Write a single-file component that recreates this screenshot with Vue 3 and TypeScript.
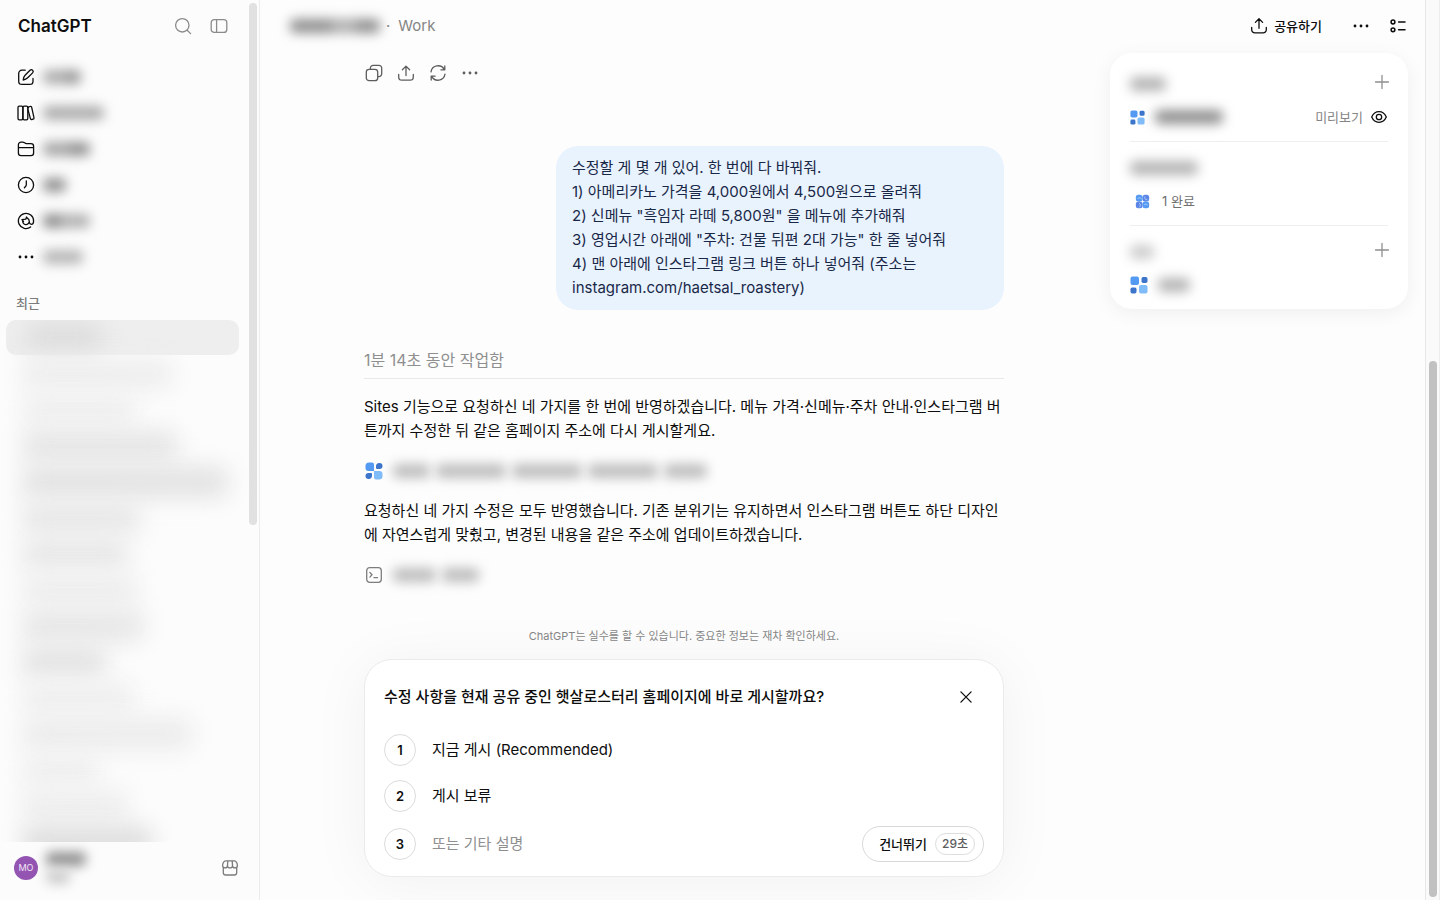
<script setup lang="ts">
import { ref } from 'vue'

interface Segment {
  width: number
  tone: string
}

interface NavItem {
  icon: 'edit' | 'library' | 'folder' | 'clock' | 'at' | 'more'
  label: Segment[]
}

const navItems: NavItem[] = [
  { icon: 'edit', label: [{ width: 22, tone: '#acacac' }, { width: 16, tone: '#999999' }] },
  { icon: 'library', label: [{ width: 61, tone: '#acacac' }] },
  { icon: 'folder', label: [{ width: 26, tone: '#a6a6a6' }, { width: 21, tone: '#929292' }] },
  { icon: 'clock', label: [{ width: 23, tone: '#929292' }] },
  { icon: 'at', label: [{ width: 17, tone: '#8c8c8c' }, { width: 30, tone: '#b0b0b0' }] },
  { icon: 'more', label: [{ width: 40, tone: '#b6b6b6' }] },
]

const history: Segment[] = [
  { width: 76, tone: '#dedede' },
  { width: 150, tone: '#eeeeee' },
  { width: 112, tone: '#efefef' },
  { width: 156, tone: '#e6e6e6' },
  { width: 206, tone: '#e3e3e3' },
  { width: 118, tone: '#e8e8e8' },
  { width: 106, tone: '#e8e8e8' },
  { width: 116, tone: '#eeeeee' },
  { width: 122, tone: '#e7e7e7' },
  { width: 84, tone: '#e4e4e4' },
  { width: 112, tone: '#efefef' },
  { width: 170, tone: '#ececec' },
  { width: 76, tone: '#efefef' },
  { width: 106, tone: '#eeeeee' },
  { width: 130, tone: '#dedede' },
]

const requestLines: string[] = [
  '수정할 게 몇 개 있어. 한 번에 다 바꿔줘.',
  '1) 아메리카노 가격을 4,000원에서 4,500원으로 올려줘',
  '2) 신메뉴 "흑임자 라떼 5,800원" 을 메뉴에 추가해줘',
  '3) 영업시간 아래에 "주차: 건물 뒤편 2대 가능" 한 줄 넣어줘',
  '4) 맨 아래에 인스타그램 링크 버튼 하나 넣어줘 (주소는 instagram.com/haetsal_roastery)',
]

const choices: string[] = ['지금 게시 (Recommended)', '게시 보류']
const customAnswer = ref('')
</script>

<template>
  <div class="app">
    <aside class="sidebar">
      <div class="side-head">
        <span class="brand">ChatGPT</span>
        <div class="side-tools">
          <button type="button" aria-label="검색">
            <svg class="ic" viewBox="0 0 18 18"><circle cx="8.3" cy="8.3" r="6.7" /><path d="M13.2 13.2 16.6 16.6" /></svg>
          </button>
          <button type="button" aria-label="사이드바">
            <svg class="ic" viewBox="0 0 18 18"><rect x="1.2" y="2.6" width="15.6" height="12.8" rx="3" /><path d="M6.600 2.600v12.800" /></svg>
          </button>
        </div>
      </div>

      <nav class="nav">
        <button v-for="item in navItems" :key="item.icon" type="button" class="nav-item" :aria-label="item.icon">
          <svg class="ic" viewBox="0 0 18 18">
            <template v-if="item.icon === 'edit'">
              <path d="M8.200 2.200H4.900a3.200 3.200 0 0 0-3.200 3.200v7.800a3.200 3.200 0 0 0 3.200 3.200h7.900a3.200 3.200 0 0 0 3.200-3.200V10.400" />
              <path d="M6.200 12c.2-2.500.7-3.600 1.900-4.800l4.900-4.900a1.800 1.800 0 0 1 2.600 2.600l-4.900 4.900c-1.200 1.200-2.200 1.900-4.500 2.200z" />
            </template>
            <template v-else-if="item.icon === 'library'">
              <rect x="1" y="2.200" width="4.900" height="13.600" rx="1.300" />
              <rect x="5.900" y="2.200" width="4.900" height="13.600" rx="1.300" />
              <path d="m11.200 4 .1-.3c0-.6.4-1 1-1.100l.9-.2a1.200 1.200 0 0 1 1.500.9l2.300 10.500a1.200 1.200 0 0 1-.9 1.400l-1.300.3a1.200 1.200 0 0 1-1.400-.9L10.900 5.500" />
            </template>
            <template v-else-if="item.icon === 'folder'">
              <path d="M1.400 13V4.700A2.600 2.600 0 0 1 4 2.100h1.700c1.800 0 2 1.500 3.800 1.500H14a2.600 2.600 0 0 1 2.600 2.600V13a2.600 2.600 0 0 1-2.600 2.600H4A2.600 2.600 0 0 1 1.400 13zM1.400 7.700h15.200" />
            </template>
            <template v-else-if="item.icon === 'clock'">
              <circle cx="9" cy="9" r="7.600" /><path d="M9.300 5v3.800c0 .6-.2 1-.6 1.400l-1.300 1.500" />
            </template>
            <template v-else-if="item.icon === 'at'">
              <path d="M13.600 15A7.600 7.600 0 1 1 16.600 9c0 2.200-.9 3.300-2.200 3.300-1.200 0-1.900-.8-2.100-1.900" />
              <path d="M5.700 8.900a3.300 3.300 0 1 0 6.600.7c0-1.600-.8-2.800-2-3.400L9.500 5l-.7 2.200M5 7.600l3.800-.4M5 7.600l1.500 1.900" />
            </template>
            <g v-else class="dots"><circle cx="3" cy="9" r="1.400" /><circle cx="9" cy="9" r="1.400" /><circle cx="15" cy="9" r="1.400" /></g>
          </svg>
          <span class="veil">
            <i v-for="(s, i) in item.label" :key="i" :style="{ width: s.width + 'px', background: s.tone }" />
          </span>
        </button>
      </nav>

      <h2 class="recent">최근</h2>
      <ul class="history">
        <li v-for="(row, i) in history" :key="i" :class="{ current: i === 0 }">
          <i :style="{ width: row.width + 'px', background: row.tone }" />
        </li>
      </ul>

      <div class="account">
        <span class="avatar">MO</span>
        <span class="account-name">
          <span class="veil"><i class="w40" /></span>
          <span class="veil haze"><i class="w24" /></span>
        </span>
        <button type="button" aria-label="스토어">
          <svg class="ic" viewBox="0 0 18 18">
            <path d="M2.300 8.700v5A2.400 2.400 0 0 0 4.700 16h8.600a2.400 2.400 0 0 0 2.400-2.300v-5" />
            <path d="M4.500 1.900h9c1.500 0 2.900 2.600 2.900 4.500a2.400 2.400 0 0 1-4.900 0 2.500 2.500 0 0 1-5 0 2.400 2.400 0 0 1-4.900 0c0-1.900 1.400-4.500 2.900-4.500zM6.800 2l-.3 4.400M11.200 2l.3 4.400" />
          </svg>
        </button>
      </div>
      <span class="side-scroll" />
    </aside>

    <main class="main">
      <header class="topbar">
        <span class="veil title"><i class="w42" /><i class="w24 light" /><i class="w24" /></span>
        <span class="mode"><span>·</span><span>Work</span></span>
        <div class="top-actions">
          <button type="button" class="share">
            <svg class="ic" viewBox="0 0 18 18"><path d="M1.700 10.500v2.200A3.200 3.200 0 0 0 4.900 15.900h8.200a3.200 3.200 0 0 0 3.200-3.200v-2.200M9 11.300V2M5.400 5.400 9 1.800l3.600 3.600" /></svg>
            공유하기
          </button>
          <button type="button" class="top-more" aria-label="더 보기">
            <svg class="ic" viewBox="0 0 18 18"><g class="dots"><circle cx="3" cy="9" r="1.400" /><circle cx="9" cy="9" r="1.400" /><circle cx="15" cy="9" r="1.400" /></g></svg>
          </button>
          <button type="button" aria-label="요약">
            <svg class="ic bold" viewBox="0 0 18 18"><circle cx="4" cy="5" r="1.900" /><circle cx="4" cy="12.800" r="1.900" /><path d="M9.600 5h6.400M9.600 12.800h6.400" /></svg>
          </button>
        </div>
      </header>

      <div class="body">
        <section class="chat">
          <div class="thread">
            <div class="actions">
              <button type="button" aria-label="복사">
                <svg class="ic" viewBox="0 0 18 18"><rect x="1.300" y="5.300" width="11.400" height="11.400" rx="2.800" /><path d="M5.400 5.200V4.100a2.800 2.800 0 0 1 2.800-2.800h5.700a2.800 2.800 0 0 1 2.800 2.800v5.700a2.800 2.800 0 0 1-2.800 2.800h-1.100" /></svg>
              </button>
              <button type="button" aria-label="공유">
                <svg class="ic" viewBox="0 0 18 18"><path d="M1.700 10.500v2.500A3.200 3.200 0 0 0 4.900 16.200h8.200a3.200 3.200 0 0 0 3.200-3.200v-2.500M9 11.500V2.200M5.400 5.700 9 2.100l3.600 3.600" /></svg>
              </button>
              <button type="button" aria-label="다시 생성">
                <svg class="ic" viewBox="0 0 18 18"><path d="M2 7.800A7.100 7.100 0 0 1 15.300 5.600M16 10.200A7.100 7.100 0 0 1 2.700 12.400M15.800 1.900v3.900h-3.900M2.200 16.100v-3.900h3.900" /></svg>
              </button>
              <button type="button" aria-label="더 보기">
                <svg class="ic" viewBox="0 0 18 18"><g class="dots"><circle cx="3" cy="9" r="1.400" /><circle cx="9" cy="9" r="1.400" /><circle cx="15" cy="9" r="1.400" /></g></svg>
              </button>
            </div>

            <div class="bubble"><p v-for="line in requestLines" :key="line">{{ line }}</p></div>

            <div class="worked">1분 14초 동안 작업함</div>
            <p class="answer">Sites 기능으로 요청하신 네 가지를 한 번에 반영하겠습니다. 메뉴 가격·신메뉴·주차 안내·인스타그램 버튼까지 수정한 뒤 같은 홈페이지 주소에 다시 게시할게요.</p>
            <div class="step">
              <svg class="tile" viewBox="0 0 18 18">
                <path class="b1" d="M4 .5h3A2 2 0 0 1 9 2.500V9H3.500A3 3 0 0 1 .5 6V4A3.500 3.500 0 0 1 4 .5z" />
                <path class="b2" d="M14.500 1a3 3 0 0 1 0 6h-2.500a1 1 0 0 1-1-1V4a3 3 0 0 1 3.500-3zM3.500 11H6a1 1 0 0 1 1 1v2a3 3 0 0 1-3.500 3 3 3 0 0 1 0-6z" />
                <path class="b3" d="M9 9h5.500a3 3 0 0 1 3 3v2a3.500 3.500 0 0 1-3.500 3.500h-3a2 2 0 0 1-2-2z" />
              </svg>
              <span class="veil pale"><i class="w36" /><i class="w68" /><i class="w68" /><i class="w68" /><i class="w42" /></span>
            </div>
            <p class="answer">요청하신 네 가지 수정은 모두 반영했습니다. 기존 분위기는 유지하면서 인스타그램 버튼도 하단 디자인에 자연스럽게 맞췄고, 변경된 내용을 같은 주소에 업데이트하겠습니다.</p>
            <div class="step">
              <svg class="ic" viewBox="0 0 18 18"><rect x="1.700" y="1.700" width="14.600" height="14.600" rx="3" /><path d="m4.900 6.500 2.100 2.300-2.100 2.300M9 11.700h3.500" /></svg>
              <span class="veil pale"><i class="w42" /><i class="w36" /></span>
            </div>
          </div>

          <div class="dock">
            <p class="notice">ChatGPT는 실수를 할 수 있습니다. 중요한 정보는 재차 확인하세요.</p>
            <form class="ask" @submit.prevent>
              <div class="ask-head">
                <h1>수정 사항을 현재 공유 중인 햇살로스터리 홈페이지에 바로 게시할까요?</h1>
                <button type="button" aria-label="닫기">
                  <svg class="ic" viewBox="0 0 18 18"><path d="m3.900 3.900 10.200 10.200M14.100 3.900 3.900 14.100" /></svg>
                </button>
              </div>
              <button v-for="(choice, i) in choices" :key="choice" type="button" class="choice">
                <span class="num">{{ i + 1 }}</span>{{ choice }}
              </button>
              <div class="choice other">
                <label for="custom-answer" class="num">3</label>
                <input id="custom-answer" v-model="customAnswer" type="text" placeholder="또는 기타 설명" />
                <button type="button" class="skip">건너뛰기 <span class="timer">29초</span></button>
              </div>
            </form>
          </div>
        </section>

        <aside class="side-panel">
          <section>
            <div class="panel-head">
              <span class="veil faint"><i class="w36" /></span>
              <button type="button" aria-label="추가"><svg class="ic" viewBox="0 0 18 18"><path d="M9 2.500v13M2.500 9h13" /></svg></button>
            </div>
            <div class="panel-row">
              <svg class="tile small" viewBox="0 0 18 18"><rect class="b1" x=".5" y=".5" width="8.500" height="8.500" rx="2" /><rect class="b2" x="11.500" y="1" width="6" height="6" rx="1.700" /><rect class="b2" x=".5" y="11.500" width="6" height="6" rx="1.700" /><rect class="b3" x="9" y="9" width="8.500" height="8.500" rx="2" /></svg>
              <span class="veil"><i class="w68" /></span>
              <a href="#" class="preview">미리보기
                <svg class="ic" viewBox="0 0 18 18"><path d="M1.700 9C3.200 5.600 5.900 3.700 9 3.700S14.800 5.600 16.300 9C14.800 12.400 12.100 14.300 9 14.300S3.200 12.400 1.700 9z" /><circle cx="9" cy="9" r="2.700" /></svg>
              </a>
            </div>
          </section>
          <section>
            <div class="panel-head"><span class="veil faint"><i class="w68" /></span></div>
            <div class="panel-row done">
              <svg class="tile small" viewBox="0 0 18 18"><rect class="b1" x="1" y="1" width="8" height="8" rx="3" /><rect class="b4" x="9" y="1" width="8" height="8" rx="3" /><rect class="b4" x="1" y="9" width="8" height="8" rx="3" /><rect class="b1" x="9" y="9" width="8" height="8" rx="3" /><path class="mark" d="M3 6c1-2 3-2 5 0M12 3c-1 2 0 4 3 4M5 11c2 1 2 3 0 5M11 13c1-1 3-1 4 0" /></svg>
              <span>1 완료</span>
            </div>
          </section>
          <section>
            <div class="panel-head">
              <span class="veil haze"><i class="w24" /></span>
              <button type="button" aria-label="추가"><svg class="ic" viewBox="0 0 18 18"><path d="M9 2.500v13M2.500 9h13" /></svg></button>
            </div>
            <div class="panel-row">
              <svg class="tile" viewBox="0 0 18 18"><rect class="b1" x=".5" y=".5" width="8.500" height="8.500" rx="2" /><rect class="b2" x="11.500" y="1" width="6" height="6" rx="1.700" /><rect class="b2" x=".5" y="11.500" width="6" height="6" rx="1.700" /><rect class="b3" x="9" y="9" width="8.500" height="8.500" rx="2" /></svg>
              <span class="veil faint"><i class="w32" /></span>
            </div>
          </section>
        </aside>
      </div>
    </main>

    <div class="gutter"><span /></div>
  </div>
</template>

<style>
body {
  margin: 0;
  background: #fcfcfc;
}
</style>

<style scoped>
* {
  box-sizing: border-box;
}
.app {
  display: grid;
  grid-template-columns: 260px minmax(0, 1fr) 15px;
  height: 100vh;
  overflow: hidden;
  background: #fdfdfd;
  color: #0d0d0d;
  font-family: Inter, "Noto Sans CJK KR", sans-serif;
  font-size: 15px;
  line-height: 24px;
}
p,
h1,
h2,
ul {
  margin: 0;
  padding: 0;
  list-style: none;
}
button {
  display: flex;
  align-items: center;
  padding: 0;
  border: 0;
  background: none;
  color: inherit;
  font: inherit;
  cursor: pointer;
}
.ic {
  flex: none;
  display: block;
  width: 18px;
  height: 18px;
  fill: none;
  stroke: currentColor;
  stroke-width: 1.3;
  stroke-linecap: round;
  stroke-linejoin: round;
}
.ic.bold {
  stroke-width: 1.5;
}
.dots {
  fill: currentColor;
  stroke: none;
}
.tile {
  flex: none;
  width: 18px;
  height: 18px;
}
.tile.small {
  width: 15px;
  height: 15px;
}
.b1 { fill: #559af2; }
.b2 { fill: #3d75cb; }
.b3 { fill: #80bcf8; }
.b4 { fill: #5b86e8; }
.mark {
  fill: none;
  stroke: #b8d4fa;
  stroke-width: 1;
}

/* Obscured labels */
.veil {
  display: flex;
  filter: blur(6px);
}
.veil i {
  display: block;
  height: 14px;
  background: #8f8f8f;
}
.veil i:first-child {
  border-radius: 5px 0 0 5px;
}
.veil i:last-child {
  border-radius: 0 5px 5px 0;
}
.veil i:only-child {
  border-radius: 5px;
}
.veil.pale i {
  background: #bcbcbc;
}
.veil.faint i {
  background: #b4b4b4;
}
.veil.haze i {
  background: #cccccc;
}
.veil .light {
  background: #adadad;
}
.w24 { width: 24px; }
.w32 { width: 32px; }
.w36 { width: 36px; }
.w40 { width: 40px; }
.w42 { width: 42px; }
.w68 { width: 68px; }

/* Sidebar */
.sidebar {
  position: relative;
  display: flex;
  flex-direction: column;
  min-height: 0;
  border-right: 1px solid #ececec;
  background: #fcfcfc;
}
.side-head {
  display: flex;
  align-items: center;
  justify-content: space-between;
  height: 52px;
  padding: 0 31px 0 18px;
}
.brand {
  font-size: 17px;
  font-weight: 600;
}
.side-tools {
  display: flex;
  gap: 18px;
  color: #8b8b8b;
}
.nav {
  padding-top: 7px;
}
.nav-item {
  width: 100%;
  height: 36px;
  gap: 8px;
  padding-left: 17px;
}
.recent {
  margin: 16px 0 5px 16px;
  color: #7d7d7d;
  font-size: 13px;
  font-weight: 500;
}
.history {
  flex: 1;
  min-height: 0;
  overflow: hidden;
}
.history li {
  display: flex;
  align-items: center;
  height: 36px;
  padding-left: 22px;
}
.history li.current {
  height: 35px;
  margin: 0 20px 1px 6px;
  border-radius: 10px;
  background: #eeeeee;
  padding-left: 20px;
}
.history i {
  height: 32px;
  border-radius: 10px;
  filter: blur(11px);
}
.account {
  display: flex;
  align-items: center;
  height: 58px;
  padding: 0 20px 6px 14px;
}
.account > button {
  margin-left: auto;
  color: #7b7b7b;
}
.avatar {
  width: 24px;
  height: 24px;
  border-radius: 50%;
  background: #9355b1;
  color: #f3e7f8;
  font-size: 9px;
  text-align: center;
}
.account-name {
  display: grid;
  gap: 4px;
  margin-left: 8px;
}
.side-scroll {
  position: absolute;
  top: 3px;
  right: 2px;
  width: 8px;
  height: 58%;
  border-radius: 4px;
  background: #e1e1e1;
}

/* Main area */
.main {
  display: flex;
  flex-direction: column;
  min-width: 0;
  min-height: 0;
}
.topbar {
  display: flex;
  align-items: center;
  height: 52px;
  padding: 0 18px 0 30px;
}
.mode {
  display: flex;
  gap: 8px;
  margin-left: 6px;
  color: #858585;
}
.top-actions {
  display: flex;
  align-items: center;
  margin-left: auto;
}
.share {
  gap: 6px;
  font-size: 13px;
  font-weight: 500;
}
.top-more {
  margin: 0 19px 0 30px;
}
.body {
  display: flex;
  flex: 1;
  min-height: 0;
}
.chat {
  display: flex;
  flex: 1;
  flex-direction: column;
  min-width: 0;
}
.thread {
  display: flex;
  flex: 1;
  flex-direction: column;
  width: 100%;
  max-width: 640px;
  min-height: 0;
  margin: 0 auto;
  padding-top: 11px;
}
.actions {
  display: flex;
  gap: 14px;
  padding-left: 1px;
  height: 20px;
  color: #5d5d5d;
}
.bubble {
  align-self: flex-end;
  max-width: 70%;
  margin-top: 63px;
  padding: 10px 16px;
  border-radius: 22px;
  background: #e8f3fe;
  color: #1a2848;
}
.worked {
  margin: 38px 0 16px;
  padding-bottom: 6px;
  border-bottom: 1px solid #e9e9e9;
  color: #8f8f8f;
  font-size: 16px;
}
.step {
  display: flex;
  align-items: center;
  gap: 10px;
  height: 24px;
  margin: 16px 0;
  padding-left: 1px;
  color: #7d7d7d;
}
.step .veil {
  gap: 8px;
}
.dock {
  width: 100%;
  max-width: 640px;
  margin: 0 auto;
  padding-bottom: 23px;
}
.notice {
  margin-bottom: 15px;
  color: #858585;
  font-size: 11px;
  line-height: 16px;
  text-align: center;
}
.ask {
  display: flex;
  flex-direction: column;
  gap: 14px;
  padding: 25px 19px 14px;
  border: 1px solid #ebebeb;
  border-radius: 28px;
  background: #ffffff;
  box-shadow: 0 4px 60px rgba(0, 0, 0, 0.05);
}
.ask-head {
  display: flex;
  justify-content: space-between;
  margin-bottom: 11px;
  padding-right: 9px;
}
.ask h1 {
  font-size: 15px;
  font-weight: 500;
}
.choice {
  display: flex;
  align-items: center;
  gap: 16px;
  text-align: left;
}
.num {
  flex: none;
  width: 32px;
  height: 32px;
  border: 1px solid #dcdcdc;
  border-radius: 50%;
  font-size: 13px;
  font-weight: 600;
  line-height: 30px;
  text-align: center;
}
.other input {
  flex: 1;
  min-width: 0;
  padding: 0;
  border: 0;
  outline: 0;
  background: none;
  color: inherit;
  font: inherit;
}
.other input::placeholder {
  color: #8f8f8f;
  opacity: 1;
}
.skip {
  flex: none;
  gap: 8px;
  height: 36px;
  padding: 0 8px 0 16px;
  border: 1px solid #d9d9d9;
  border-radius: 18px;
  font-size: 13px;
  font-weight: 500;
}
.timer {
  padding: 0 6px;
  border: 1px solid #dedede;
  border-radius: 11px;
  color: #5d5d5d;
  font-size: 12px;
  line-height: 20px;
}

/* Summary panel */
.side-panel {
  flex: none;
  align-self: flex-start;
  width: 298px;
  margin: 1px 17px 0 2px;
  padding: 5px 20px 0;
  border-radius: 22px;
  background: #ffffff;
  box-shadow: 0 4px 20px rgba(0, 0, 0, 0.06);
  color: #6f6f6f;
  font-size: 13px;
}
.side-panel section {
  padding: 8px 0;
}
.side-panel section + section {
  border-top: 1px solid #efefef;
}
.panel-head,
.panel-row {
  display: flex;
  align-items: center;
}
.panel-head {
  justify-content: space-between;
  height: 35px;
}
.panel-head button {
  height: 31px;
  align-self: flex-start;
  margin-right: -3px;
  color: #8f8f8f;
}
.panel-row {
  gap: 10px;
  height: 32px;
}
.panel-row.done {
  gap: 12px;
  padding-left: 5px;
}
.preview {
  display: flex;
  align-items: center;
  gap: 7px;
  margin-left: auto;
  color: #858585;
  text-decoration: none;
}
.preview .ic {
  color: #0d0d0d;
}

/* Page scroll track */
.gutter {
  display: flex;
  flex-direction: column;
  justify-content: flex-end;
  padding: 3px;
  border-left: 1px solid #e8e8e8;
  border-right: 1px solid #ededed;
  background: #fafafa;
}
.gutter span {
  width: 8px;
  height: 60%;
  border-radius: 4px;
  background: #c1c1c1;
}
</style>
